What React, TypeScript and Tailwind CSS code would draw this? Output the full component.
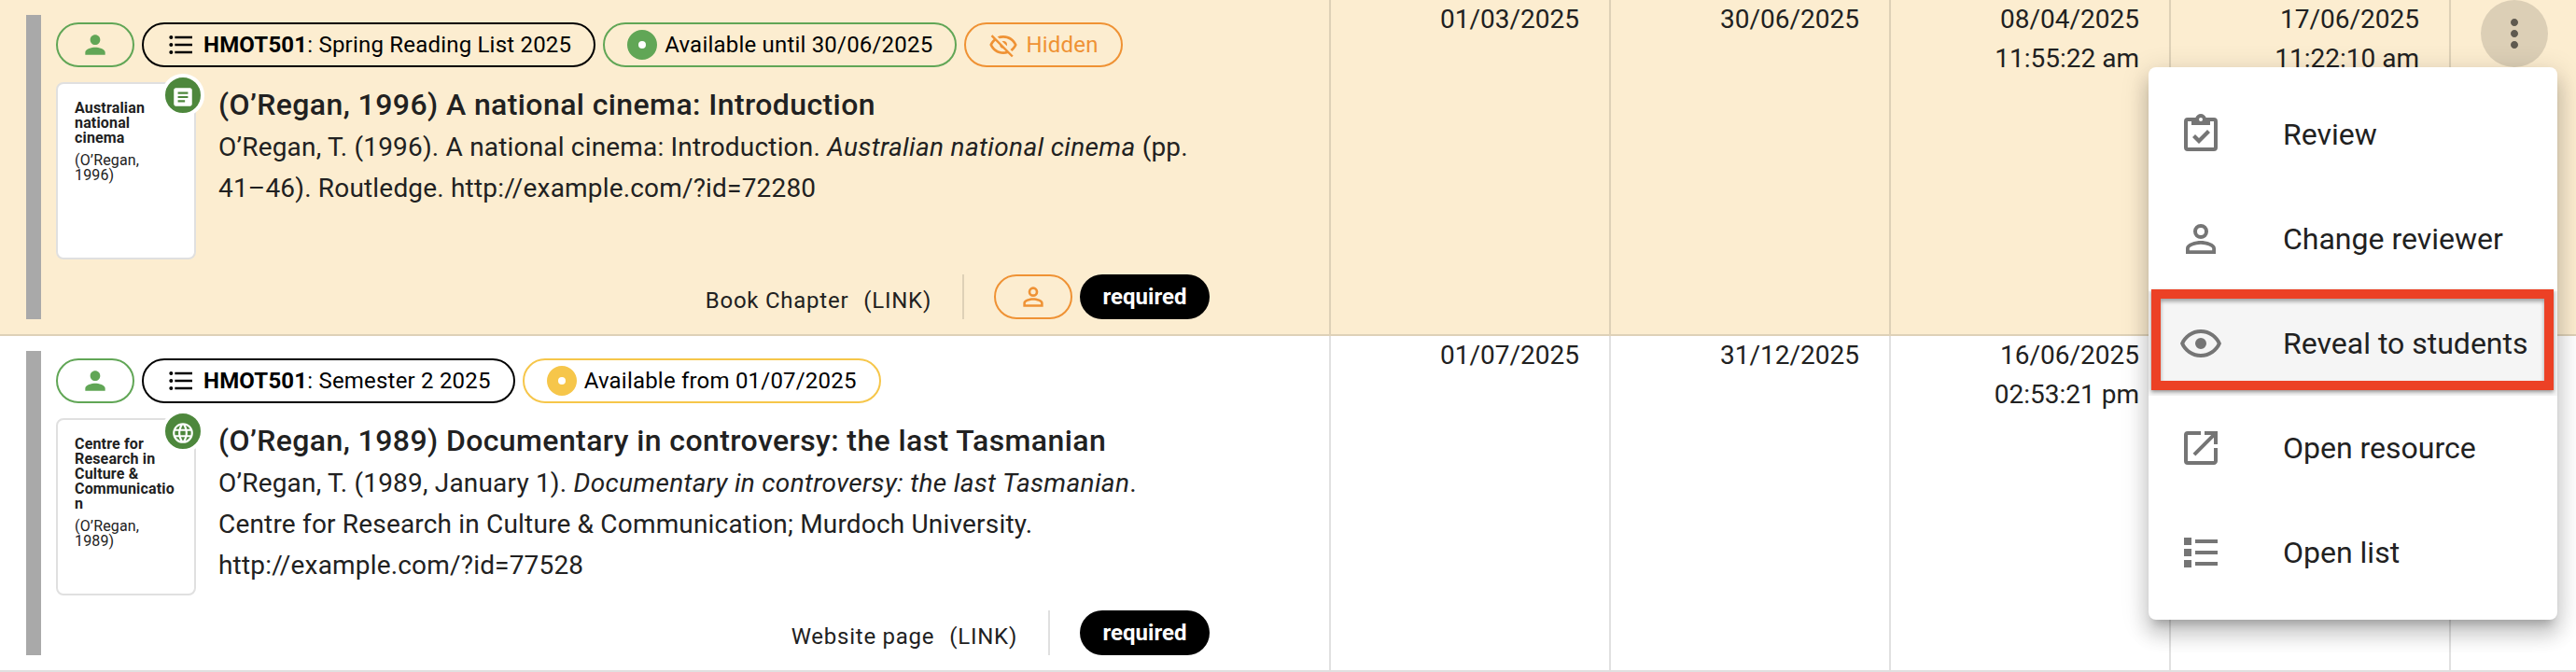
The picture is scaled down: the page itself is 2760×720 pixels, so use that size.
import { MdArticle, MdFormatListBulleted, MdMoreVert, MdOpenInNew, MdPerson } from "react-icons/md";
import type { ReactNode } from "react";

type IconProps = { className?: string };

const makeIcon = (d: string) =>
  function Icon({ className }: IconProps) {
    return (
      <svg viewBox="0 0 24 24" fill="currentColor" className={className}>
        <path d={d} />
      </svg>
    );
  };

const ClipboardCheck = makeIcon(
  "M19,3H14.82C14.4,1.84 13.3,1 12,1C10.7,1 9.6,1.84 9.18,3H5A2,2 0 0,0 3,5V19A2,2 0 0,0 5,21H19A2,2 0 0,0 21,19V5A2,2 0 0,0 19,3M12,3A1,1 0 0,1 13,4A1,1 0 0,1 12,5A1,1 0 0,1 11,4A1,1 0 0,1 12,3M7,7H17V5H19V19H5V5H7V7M7.5,13.5L9,12L11,14L15.5,9.5L17,11L11,17L7.5,13.5Z"
);
const AccountOutline = makeIcon(
  "M12,4A4,4 0 0,1 16,8A4,4 0 0,1 12,12A4,4 0 0,1 8,8A4,4 0 0,1 12,4M12,6A2,2 0 0,0 10,8A2,2 0 0,0 12,10A2,2 0 0,0 14,8A2,2 0 0,0 12,6M12,13C14.67,13 20,14.33 20,17V20H4V17C4,14.33 9.33,13 12,13M12,14.9C9.03,14.9 5.9,16.36 5.9,17V18.1H18.1V17C18.1,16.36 14.97,14.9 12,14.9Z"
);
const EyeOutline = makeIcon(
  "M12,9A3,3 0 0,1 15,12A3,3 0 0,1 12,15A3,3 0 0,1 9,12A3,3 0 0,1 12,9M12,4.5C17,4.5 21.27,7.61 23,12C21.27,16.39 17,19.5 12,19.5C7,19.5 2.73,16.39 1,12C2.73,7.61 7,4.5 12,4.5M3.18,12C4.83,15.36 8.24,17.5 12,17.5C15.76,17.5 19.17,15.36 20.82,12C19.17,8.64 15.76,6.5 12,6.5C8.24,6.5 4.83,8.64 3.18,12Z"
);
const EyeOffOutline = makeIcon(
  "M2,5.27L3.28,4L20,20.72L18.73,22L15.65,18.92C14.5,19.3 13.28,19.5 12,19.5C7,19.5 2.73,16.39 1,12C1.69,10.24 2.79,8.69 4.19,7.46L2,5.27M12,9A3,3 0 0,1 15,12C15,12.35 14.94,12.69 14.83,13L11,9.17C11.31,9.06 11.65,9 12,9M12,4.5C17,4.5 21.27,7.61 23,12C22.18,14.08 20.79,15.88 19,17.19L17.58,15.76C18.94,14.82 20.06,13.54 20.82,12C19.17,8.64 15.76,6.5 12,6.5C10.91,6.5 9.84,6.68 8.84,7L7.3,5.47C8.74,4.85 10.33,4.5 12,4.5M3.18,12C4.83,15.36 8.24,17.5 12,17.5C12.69,17.5 13.37,17.43 14,17.29L11.72,15C10.29,14.85 9.15,13.71 9,12.28L5.6,8.87C4.61,9.72 3.78,10.78 3.18,12Z"
);
const Web = makeIcon(
  "M16.36,14C16.44,13.34 16.5,12.68 16.5,12C16.5,11.32 16.44,10.66 16.36,10H19.74C19.9,10.64 20,11.31 20,12C20,12.69 19.9,13.36 19.74,14M14.59,19.56C15.19,18.45 15.65,17.25 15.97,16H18.92C17.96,17.65 16.43,18.93 14.59,19.56M14.34,14H9.66C9.56,13.34 9.5,12.68 9.5,12C9.5,11.32 9.56,10.65 9.66,10H14.34C14.43,10.65 14.5,11.32 14.5,12C14.5,12.68 14.43,13.34 14.34,14M12,19.96C11.17,18.76 10.5,17.43 10.09,16H13.91C13.5,17.43 12.83,18.76 12,19.96M8,8H5.08C6.03,6.34 7.57,5.06 9.4,4.44C8.8,5.55 8.35,6.75 8,8M5.08,16H8C8.35,17.25 8.8,18.45 9.4,19.56C7.57,18.93 6.03,17.65 5.08,16M4.26,14C4.1,13.36 4,12.69 4,12C4,11.31 4.1,10.64 4.26,10H7.64C7.56,10.66 7.5,11.32 7.5,12C7.5,12.68 7.56,13.34 7.64,14M12,4.03C12.83,5.23 13.5,6.57 13.91,8H10.09C10.5,6.57 11.17,5.23 12,4.03M18.92,8H15.97C15.65,6.75 15.19,5.55 14.59,4.44C16.43,5.07 17.96,6.34 18.92,8M12,2C6.47,2 2,6.5 2,12A10,10 0 0,0 12,22A10,10 0 0,0 22,12A10,10 0 0,0 12,2Z"
);
const ListSquares = makeIcon("M3,4H7V8H3V4M9,5V7H21V5H9M3,10H7V14H3V10M9,11V13H21V11H9M3,16H7V20H3V16M9,17V19H21V17H9");

type Item = {
  highlighted: boolean;
  list: string;
  availability: string;
  availabilityColor: string;
  hidden?: boolean;
  reviewer?: boolean;
  coverTitle: string;
  coverAuthor: string;
  badge: ReactNode;
  title: string;
  citation: ReactNode;
  type: string;
  dates: string[][];
};

const items: Item[] = [
  {
    highlighted: true,
    list: "Spring Reading List 2025",
    availability: "Available until 30/06/2025",
    availabilityColor: "border-[#61a656]",
    hidden: true,
    reviewer: true,
    coverTitle: "Australian national cinema",
    coverAuthor: "(O’Regan, 1996)",
    badge: <MdArticle className="mt-1 size-[26px]" />,
    title: "(O’Regan, 1996) A national cinema: Introduction",
    citation: (
      <>
        O’Regan, T. (1996). A national cinema: Introduction.{" "}
        <i className="tracking-[0.34px]">Australian national cinema</i> (pp.
        <br />
        41–46). Routledge. http://example.com/?id=72280
      </>
    ),
    type: "Book Chapter",
    dates: [["01/03/2025"], ["30/06/2025"], ["08/04/2025", "11:55:22 am"], ["17/06/2025", "11:22:10 am"]],
  },
  {
    highlighted: false,
    list: "Semester 2 2025",
    availability: "Available from 01/07/2025",
    availabilityColor: "border-[#f6c64a]",
    coverTitle: "Centre for Research in Culture & Communication",
    coverAuthor: "(O’Regan, 1989)",
    badge: <Web className="mt-1 size-[26px]" />,
    title: "(O’Regan, 1989) Documentary in controversy: the last Tasmanian",
    citation: (
      <>
        O’Regan, T. (1989, January 1).{" "}
        <i className="tracking-[0.32px]">Documentary in controversy: the last Tasmanian</i>.
        <br />
        Centre for Research in Culture &amp; Communication; Murdoch University.
        <br />
        http://example.com/?id=77528
      </>
    ),
    type: "Website page",
    dates: [["01/07/2025"], ["31/12/2025"], ["16/06/2025", "02:53:21 pm"], []],
  },
];

const Row = ({ item }: { item: Item }) => {
  const line = item.highlighted ? "border-[#ded1b7]" : "border-[#e0e0e0]";
  return (
    <div
      className={`grid h-[360px] grid-cols-[1424px_300px_300px_300px_300px_136px] border-b-2 ${line} ${
        item.highlighted ? "bg-[#fcedd0]" : "bg-white"
      }`}
    >
      <div className="flex gap-4 py-4 pl-7">
        <div className="w-4 bg-[#a9a9a9]" />
        <div className="flex w-[1236px] flex-col pt-2">
          <div className="flex h-12 gap-2 text-2xl tracking-[0.2px] text-black">
            <div className="flex w-[84px] items-center justify-center rounded-full border-2 border-[#61a656] text-[#61a656]">
              <MdPerson className="size-8" />
            </div>
            <div className="flex items-center rounded-full border-2 border-black px-6">
              <MdFormatListBulleted className="mr-2 size-8" />
              <span>
                <b>HMOT501</b>: {item.list}
              </span>
            </div>
            <div className={`flex items-center rounded-full border-2 px-6 ${item.availabilityColor}`}>
              <span className={`mr-2 size-8 rounded-full border-[12px] bg-white ${item.availabilityColor}`} />
              {item.availability}
            </div>
            {item.hidden && (
              <div className="flex items-center rounded-full border-2 border-[#ef9234] px-6 text-[#ef9234]">
                <EyeOffOutline className="mr-2 size-8" />
                Hidden
              </div>
            )}
          </div>
          <div className="mt-4 flex">
            <div className="relative h-[190px] w-[150px] rounded-lg border-2 border-[#e0e0e0] bg-white px-[18px] py-[18px] text-base leading-4 tracking-[0.16px]">
              <p className="font-bold break-words">{item.coverTitle}</p>
              <p className="mt-2">{item.coverAuthor}</p>
              <div className="absolute -top-[11px] -right-[11px] flex size-[46px] items-center justify-center rounded-full border-4 border-white bg-[#4d873c] text-white">
                {item.badge}
              </div>
            </div>
            <div className="ml-6 whitespace-nowrap">
              <h3 className="text-[32px] leading-[48px] font-medium tracking-[0.4px]">{item.title}</h3>
              <p className="text-[28px] leading-[44px] tracking-[0.18px]">{item.citation}</p>
            </div>
          </div>
          <div className="mt-auto flex h-12 items-center justify-end">
            <span className="mt-2 text-2xl tracking-[0.75px]">{item.type}</span>
            <span className="mt-2 ml-4 text-2xl tracking-[0.75px]">(LINK)</span>
            <div className={`ml-[33px] h-12 border-l-2 ${line}`} />
            {item.reviewer && (
              <div className="ml-8 -mr-6 flex h-12 w-[84px] items-center justify-center rounded-full border-2 border-[#ef9234] text-[#ef9234]">
                <AccountOutline className="size-8" />
              </div>
            )}
            <div className="ml-8 flex h-12 w-[139px] items-center justify-center rounded-full bg-black text-2xl font-bold text-white">
              required
            </div>
          </div>
        </div>
      </div>
      {item.dates.map((lines, i) => (
        <div key={i} className={`border-l-2 pr-8 text-right text-[28px] leading-[42px] ${line}`}>
          {lines.map((text) => (
            <div key={text}>{text}</div>
          ))}
        </div>
      ))}
      <div className={`border-l-2 pl-8 ${line}`}>
        {item.highlighted && (
          <button className="flex size-[72px] items-center justify-center rounded-full bg-[#dccfb6] text-[#5f5a50]">
            <MdMoreVert className="size-12" />
          </button>
        )}
      </div>
    </div>
  );
};

const menu = [
  { label: "Review", icon: <ClipboardCheck className="size-12" /> },
  { label: "Change reviewer", icon: <AccountOutline className="size-12" /> },
  { label: "Reveal to students", icon: <EyeOutline className="size-12" />, active: true },
  { label: "Open resource", icon: <MdOpenInNew className="size-12" /> },
  { label: "Open list", icon: <ListSquares className="size-12" /> },
];

const ActionMenu = () => (
  <div className="absolute top-[72px] left-[2302px] w-[438px] rounded-lg bg-white py-4 shadow-[0_10px_10px_-6px_rgba(0,0,0,0.2),0_16px_20px_2px_rgba(0,0,0,0.14),0_6px_28px_4px_rgba(0,0,0,0.12)]">
    {menu.map((entry) => (
      <div
        key={entry.label}
        className={`relative flex h-28 items-center gap-16 px-8 text-[32px] whitespace-nowrap ${entry.active ? "bg-[#f5f5f5]" : ""}`}
      >
        <span className="text-[#757575]">{entry.icon}</span>
        {entry.label}
        {entry.active && (
          <div className="absolute -top-0.5 left-[3px] h-[108px] w-[431px] border-[10px] border-[#ec4125] shadow-[0_2px_4px_rgba(0,0,0,0.4),inset_0_3px_4px_rgba(0,0,0,0.35)]" />
        )}
      </div>
    ))}
  </div>
);

export default function App() {
  return (
    <div className="relative h-[720px] w-[2760px] overflow-hidden bg-white font-['Roboto',sans-serif] text-[#212121]">
      {items.map((item) => (
        <Row key={item.title} item={item} />
      ))}
      <ActionMenu />
    </div>
  );
}
